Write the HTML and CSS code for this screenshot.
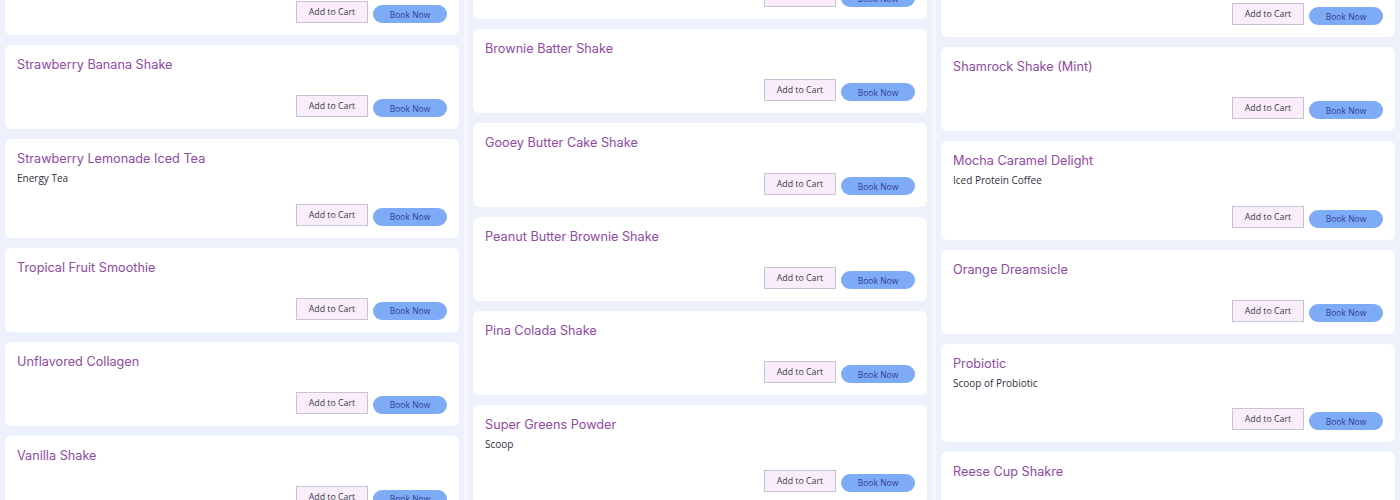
FILE: index.html
```html
<!DOCTYPE html>
<html lang="en">
<head>
    <meta charset="UTF-8">
    <meta name="viewport" content="width=device-width, initial-scale=1.0">
    <title>Menu</title>
    <link rel="stylesheet" href="styles.css">
</head>
<body>
    <div class="board">
        <!-- Column 1 -->
        <div class="column">
            <div class="list list-a">
                <div class="card">
                    <div class="card-title">Strawberry Shake</div>
                    <div class="card-actions">
                        <button class="btn-cart">Add to Cart</button>
                        <button class="btn-book">Book Now</button>
                    </div>
                </div>
                <div class="card">
                    <div class="card-title">Strawberry Banana Shake</div>
                    <div class="card-actions">
                        <button class="btn-cart">Add to Cart</button>
                        <button class="btn-book">Book Now</button>
                    </div>
                </div>
                <div class="card">
                    <div class="card-title">Strawberry Lemonade Iced Tea</div>
                    <div class="card-desc">Energy Tea</div>
                    <div class="card-actions">
                        <button class="btn-cart">Add to Cart</button>
                        <button class="btn-book">Book Now</button>
                    </div>
                </div>
                <div class="card">
                    <div class="card-title">Tropical Fruit Smoothie</div>
                    <div class="card-actions">
                        <button class="btn-cart">Add to Cart</button>
                        <button class="btn-book">Book Now</button>
                    </div>
                </div>
                <div class="card">
                    <div class="card-title">Unflavored Collagen</div>
                    <div class="card-actions">
                        <button class="btn-cart">Add to Cart</button>
                        <button class="btn-book">Book Now</button>
                    </div>
                </div>
                <div class="card">
                    <div class="card-title">Vanilla Shake</div>
                    <div class="card-actions">
                        <button class="btn-cart">Add to Cart</button>
                        <button class="btn-book">Book Now</button>
                    </div>
                </div>
            </div>
        </div>

        <!-- Column 2 -->
        <div class="column">
            <div class="list list-b">
                <div class="card">
                    <div class="card-title">Birthday Cake Shake</div>
                    <div class="card-actions">
                        <button class="btn-cart">Add to Cart</button>
                        <button class="btn-book">Book Now</button>
                    </div>
                </div>
                <div class="card">
                    <div class="card-title">Brownie Batter Shake</div>
                    <div class="card-actions">
                        <button class="btn-cart">Add to Cart</button>
                        <button class="btn-book">Book Now</button>
                    </div>
                </div>
                <div class="card">
                    <div class="card-title">Gooey Butter Cake Shake</div>
                    <div class="card-actions">
                        <button class="btn-cart">Add to Cart</button>
                        <button class="btn-book">Book Now</button>
                    </div>
                </div>
                <div class="card">
                    <div class="card-title">Peanut Butter Brownie Shake</div>
                    <div class="card-actions">
                        <button class="btn-cart">Add to Cart</button>
                        <button class="btn-book">Book Now</button>
                    </div>
                </div>
                <div class="card">
                    <div class="card-title">Pina Colada Shake</div>
                    <div class="card-actions">
                        <button class="btn-cart">Add to Cart</button>
                        <button class="btn-book">Book Now</button>
                    </div>
                </div>
                <div class="card">
                    <div class="card-title">Super Greens Powder</div>
                    <div class="card-desc">Scoop</div>
                    <div class="card-actions">
                        <button class="btn-cart">Add to Cart</button>
                        <button class="btn-book">Book Now</button>
                    </div>
                </div>
            </div>
        </div>

        <!-- Column 3 -->
        <div class="column">
            <div class="list list-c">
                <div class="card">
                    <div class="card-title">Pumpkin Pie Shake</div>
                    <div class="card-actions">
                        <button class="btn-cart">Add to Cart</button>
                        <button class="btn-book">Book Now</button>
                    </div>
                </div>
                <div class="card">
                    <div class="card-title">Shamrock Shake (Mint)</div>
                    <div class="card-actions">
                        <button class="btn-cart">Add to Cart</button>
                        <button class="btn-book">Book Now</button>
                    </div>
                </div>
                <div class="card">
                    <div class="card-title">Mocha Caramel Delight</div>
                    <div class="card-desc">Iced Protein Coffee</div>
                    <div class="card-actions">
                        <button class="btn-cart">Add to Cart</button>
                        <button class="btn-book">Book Now</button>
                    </div>
                </div>
                <div class="card">
                    <div class="card-title">Orange Dreamsicle</div>
                    <div class="card-actions">
                        <button class="btn-cart">Add to Cart</button>
                        <button class="btn-book">Book Now</button>
                    </div>
                </div>
                <div class="card">
                    <div class="card-title">Probiotic</div>
                    <div class="card-desc">Scoop of Probiotic</div>
                    <div class="card-actions">
                        <button class="btn-cart">Add to Cart</button>
                        <button class="btn-book">Book Now</button>
                    </div>
                </div>
                <div class="card">
                    <div class="card-title">Reese Cup Shakre</div>
                    <div class="card-actions">
                        <button class="btn-cart">Add to Cart</button>
                        <button class="btn-book">Book Now</button>
                    </div>
                </div>
            </div>
        </div>
    </div>
</body>
</html>
```

FILE: styles.css
```css
body {
    margin: 0;
    font-family: "Open Sans", Arial, sans-serif;
    background-color: #f6f8fe;
    height: 500px;
    overflow: hidden;
}
.board {
    display: grid;
    grid-template-columns: repeat(3, 1fr);
    gap: 4px;
    min-height: 500px;
}
.column {
    background: #ecf1fb;
    padding: 0 5px;
}
.list {
    display: flex;
    flex-direction: column;
    gap: 10.1px;
}
/* scroll position of each list */
.list-a { margin-top: -49px; }
.list-b { margin-top: -65px; }
.list-c { margin-top: -47px; }
.card {
    background: #fff;
    border-radius: 6px;
    padding: 11px 12px 12px;
}
.card-title {
    font-family: "Inter", sans-serif;
    font-size: 12.7px;
    line-height: 17px;
    color: #914a9f;
}
.card-desc {
    margin-top: 4px;
    font-size: 10px;
    line-height: 14px;
    color: #30303c;
}
.card-actions {
    display: flex;
    justify-content: flex-end;
    align-items: flex-end;
    gap: 5px;
    margin-top: 22px;
}
.card-desc + .card-actions {
    margin-top: 18.5px;
}
.btn-cart {
    width: 72px;
    height: 22px;
    padding: 0;
    background: #f9edfa;
    border: 1px solid #c8c2d4;
    font-family: "Open Sans", sans-serif;
    font-size: 8.8px;
    color: #3b3a4c;
    cursor: pointer;
}
.btn-book {
    width: 74px;
    height: 18px;
    padding: 0;
    background: #7eabf6;
    border: none;
    border-radius: 9px;
    font-family: "Open Sans", sans-serif;
    font-size: 8.5px;
    color: #2d3f8f;
    cursor: pointer;
}
.btn-book:hover {
    background: #6b9bef;
}
```
